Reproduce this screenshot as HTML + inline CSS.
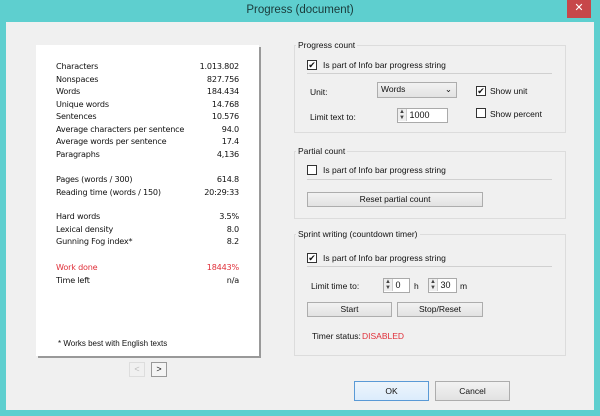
<!DOCTYPE html><html><head><style>
*{margin:0;padding:0;box-sizing:border-box}
body{width:600px;height:416px;background:#5ecfcf;position:relative;overflow:hidden;font-family:"Liberation Sans",sans-serif;font-size:9px;color:#111}
.a{position:absolute}
.title{left:0;top:4px;width:600px;text-align:center;font-size:11.5px;color:#1a3a3a}
.close{left:567px;top:0;width:24px;height:18px;background:#c7474a;color:#fff;text-align:center;font-size:11px;line-height:17px}
.client{left:6px;top:22px;width:588px;height:388px;background:#f0f0f0}
.card{left:36px;top:45px;width:223px;height:311px;background:#fff;box-shadow:2px 2px 0 #999}
.row{left:56px;width:183px;font-size:8.1px;font-family:"DejaVu Sans",sans-serif;letter-spacing:-0.2px}
.row span{float:right}
.grp{border:1px solid #dcdcdc;left:294px}
.gl{background:#f0f0f0;padding:0 2px;font-size:8.5px}
.cb{width:10px;height:10px;border:1px solid #333;background:#fff;font-size:9px;line-height:8px;text-align:center}
.sep{height:1px;background:#d0d0d0}
.btn{border:1px solid #adadad;background:linear-gradient(#f2f2f2,#e2e2e2);text-align:center;font-size:8.5px;line-height:13px}
.inp{border:1px solid #aaa;background:#fff;font-size:9px;line-height:13px}
.sp{display:inline-block;width:9px;height:12px;border-right:1px solid #ccc;vertical-align:top;font-size:6px;line-height:6px;text-align:center;color:#444;background:#eee}
</style></head><body>
<div class="a title">Progress (document)</div>
<div class="a close">✕</div>
<div class="a client"></div>
<div class="a card"></div>
<div class="a row" style="top:61px">Characters<span>1.013.802</span></div>
<div class="a row" style="top:73.5px">Nonspaces<span>827.756</span></div>
<div class="a row" style="top:86px">Words<span>184.434</span></div>
<div class="a row" style="top:98.5px">Unique words<span>14.768</span></div>
<div class="a row" style="top:111px">Sentences<span>10.576</span></div>
<div class="a row" style="top:123.5px">Average characters per sentence<span>94.0</span></div>
<div class="a row" style="top:136px">Average words per sentence<span>17.4</span></div>
<div class="a row" style="top:148.5px">Paragraphs<span>4,136</span></div>
<div class="a row" style="top:174px">Pages (words / 300)<span>614.8</span></div>
<div class="a row" style="top:186.5px">Reading time (words / 150)<span>20:29:33</span></div>
<div class="a row" style="top:211px">Hard words<span>3.5%</span></div>
<div class="a row" style="top:223.5px">Lexical density<span>8.0</span></div>
<div class="a row" style="top:236px">Gunning Fog index*<span>8.2</span></div>
<div class="a row" style="top:262px;color:#e0303a">Work done<span>18443%</span></div>
<div class="a row" style="top:274.5px">Time left<span>n/a</span></div>
<div class="a" style="left:58px;top:339px;font-size:8px">* Works best with English texts</div>
<div class="a" style="left:129px;top:362px;width:16px;height:15px;border:1px solid #ddd;color:#bbb;text-align:center;font-size:9px;line-height:13px">&lt;</div>
<div class="a" style="left:151px;top:362px;width:16px;height:15px;border:1px solid #999;background:#f4f4f4;text-align:center;font-size:9px;line-height:13px">&gt;</div>

<div class="a grp" style="top:45px;width:272px;height:88px"></div>
<div class="a gl" style="left:296px;top:40px">Progress count</div>
<div class="a cb" style="left:307px;top:60px">✔</div>
<div class="a" style="left:323px;top:60px;font-size:8.5px">Is part of Info bar progress string</div>
<div class="a sep" style="left:307px;top:73px;width:245px"></div>
<div class="a" style="left:310px;top:87px;font-size:8.5px">Unit:</div>
<div class="a btn" style="left:377px;top:82px;width:80px;height:16px;text-align:left;padding-left:3px">Words<span style="position:absolute;right:4px">⌄</span></div>
<div class="a cb" style="left:476px;top:86px">✔</div>
<div class="a" style="left:490px;top:86px;font-size:8.5px">Show unit</div>
<div class="a" style="left:310px;top:112px;font-size:8.5px">Limit text to:</div>
<div class="a inp" style="left:397px;top:108px;width:51px;height:15px"><span class="sp">▲<br>▼</span> 1000</div>
<div class="a cb" style="left:476px;top:108px"></div>
<div class="a" style="left:490px;top:109px;font-size:8.5px">Show percent</div>

<div class="a grp" style="top:151px;width:272px;height:68px"></div>
<div class="a gl" style="left:296px;top:146px">Partial count</div>
<div class="a cb" style="left:307px;top:165px"></div>
<div class="a" style="left:323px;top:165px;font-size:8.5px">Is part of Info bar progress string</div>
<div class="a sep" style="left:307px;top:179px;width:245px"></div>
<div class="a btn" style="left:307px;top:192px;width:176px;height:15px">Reset partial count</div>

<div class="a grp" style="top:234px;width:272px;height:122px"></div>
<div class="a gl" style="left:296px;top:229px">Sprint writing (countdown timer)</div>
<div class="a cb" style="left:307px;top:253px">✔</div>
<div class="a" style="left:323px;top:253px;font-size:8.5px">Is part of Info bar progress string</div>
<div class="a sep" style="left:307px;top:266px;width:245px"></div>
<div class="a" style="left:311px;top:281px;font-size:8.5px">Limit time to:</div>
<div class="a inp" style="left:383px;top:278px;width:27px;height:15px"><span class="sp">▲<br>▼</span> 0</div>
<div class="a" style="left:414px;top:281px;font-size:8.5px">h</div>
<div class="a inp" style="left:428px;top:278px;width:29px;height:15px"><span class="sp">▲<br>▼</span> 30</div>
<div class="a" style="left:460px;top:281px;font-size:8.5px">m</div>
<div class="a btn" style="left:307px;top:302px;width:85px;height:15px">Start</div>
<div class="a btn" style="left:397px;top:302px;width:86px;height:15px">Stop/Reset</div>
<div class="a" style="left:312px;top:331px;font-size:8.5px">Timer status:</div>
<div class="a" style="left:362px;top:331px;font-size:8.5px;color:#e0303a">DISABLED</div>

<div class="a btn" style="left:354px;top:381px;width:75px;height:20px;line-height:18px;border-color:#5a9ad6;background:linear-gradient(#eef5fb,#dcecfc)">OK</div>
<div class="a btn" style="left:435px;top:381px;width:75px;height:20px;line-height:18px">Cancel</div>
</body></html>
